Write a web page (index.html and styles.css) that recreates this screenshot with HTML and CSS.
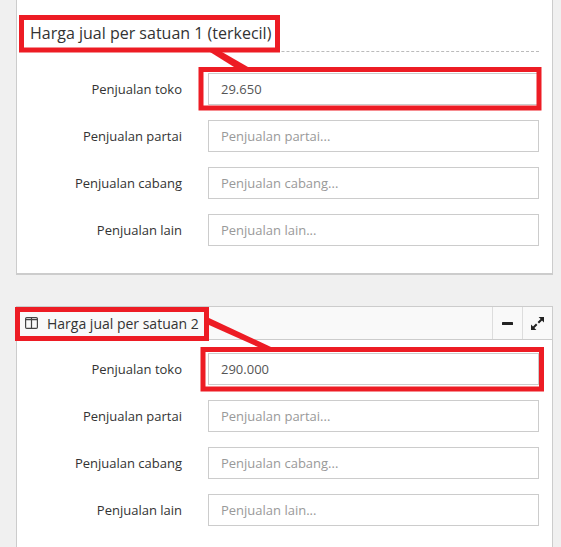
FILE: index.html
```html
<!DOCTYPE html>
<html lang="id">
<head>
  <meta charset="UTF-8" />
  <title>Harga jual</title>
  <link rel="stylesheet" href="styles.css">
</head>
<body>
  <!-- Panel 1 -->
  <section class="panel panel-first">
    <h3 class="legend">Harga jual per satuan 1 (terkecil)</h3>
    <div class="form-rows">
      <label class="row"><span class="row-label">Penjualan toko</span><input type="text" value="29.650" placeholder="Penjualan toko..."></label>
      <label class="row"><span class="row-label">Penjualan partai</span><input type="text" placeholder="Penjualan partai..."></label>
      <label class="row"><span class="row-label">Penjualan cabang</span><input type="text" placeholder="Penjualan cabang..."></label>
      <label class="row"><span class="row-label">Penjualan lain</span><input type="text" placeholder="Penjualan lain..."></label>
    </div>
  </section>

  <!-- Panel 2 -->
  <section class="panel panel-second">
    <header class="panel-head">
      <svg class="icon-columns" width="13" height="12" viewBox="0 0 13 12" fill="none" stroke="#444" stroke-width="1.2">
        <rect x="0.6" y="0.6" width="11.8" height="10.8" rx="1.2"/>
        <path d="M6.5 .6V11.4M.6 2.6H12.4"/>
      </svg>
      <span class="panel-title">Harga jual per satuan 2</span>
      <span class="head-btn">
        <svg width="11" height="3" viewBox="0 0 11 3"><rect width="11" height="3" rx="0.5" fill="#222"/></svg>
      </span>
      <span class="head-btn">
        <svg width="13" height="13" viewBox="0 0 13 13" fill="#222">
          <path d="M7.6 0H13V5.4L11 3.4 8 6.4 6.6 5 9.6 2Z"/>
          <path d="M5.4 13H0V7.6L2 9.6 5 6.6 6.4 8 3.4 11Z"/>
        </svg>
      </span>
    </header>
    <div class="form-rows">
      <label class="row"><span class="row-label">Penjualan toko</span><input type="text" value="290.000" placeholder="Penjualan toko..."></label>
      <label class="row"><span class="row-label">Penjualan partai</span><input type="text" placeholder="Penjualan partai..."></label>
      <label class="row"><span class="row-label">Penjualan cabang</span><input type="text" placeholder="Penjualan cabang..."></label>
      <label class="row"><span class="row-label">Penjualan lain</span><input type="text" placeholder="Penjualan lain..."></label>
    </div>
  </section>

  <!-- Red marks drawn over the screenshot -->
  <svg class="marks" width="561" height="547" viewBox="0 0 561 547" fill="none" stroke="#ed1c24" stroke-width="5">
    <rect x="21.5" y="17.5" width="256" height="32.5"/>
    <rect x="201" y="69.5" width="338" height="38.5"/>
    <rect x="17.5" y="309.5" width="189" height="29"/>
    <rect x="203" y="349.5" width="338.5" height="39.5"/>
    <polygon points="210,52 222,52 248,67 234,67" fill="#ed1c24" stroke="none"/>
    <polygon points="209,318 271,347 258,347 209,325" fill="#ed1c24" stroke="none"/>
  </svg>
</body>
</html>
```

FILE: styles.css
```css
html, body {
  height: 547px;
  overflow: hidden;
}

body {
  position: relative;
  margin: 0;
  padding: 0;
  background-color: #f0f0f0;
  font-family: "Open Sans", sans-serif;
  color: #333;
}

.panel {
  width: 537px;
  margin-left: 16px;
  box-sizing: border-box;
  background-color: #fff;
  border: 1px solid #ccc;
}

.panel-first {
  height: 275px;
  border-top: none;
  border-bottom-width: 2px;
}

.panel-second {
  margin-top: 31px;
  height: 241px;
  border-bottom: none;
}

.legend {
  margin: 0 13px 21px 5px;
  height: 52px;
  box-sizing: border-box;
  padding: 21px 0 0 8px;
  border-bottom: 1px dashed #bbb;
  font-size: 16px;
  line-height: 24px;
  font-weight: 400;
  color: #333;
}

.panel-head {
  display: flex;
  align-items: center;
  height: 32px;
  margin-bottom: 13px;
  background-color: #f9f9f9;
  border-bottom: 1px solid #ccc;
}

.icon-columns {
  margin-left: 8px;
}

.panel-title {
  flex: 1;
  margin-left: 9px;
  font-size: 14px;
  color: #333;
}

.head-btn {
  display: flex;
  align-items: center;
  justify-content: center;
  width: 29px;
  height: 32px;
  border-left: 1px solid #ddd;
}

.form-rows {
  display: flex;
  flex-direction: column;
  gap: 15px;
}

.row {
  display: grid;
  grid-template-columns: 165px 331px;
  column-gap: 26px;
  align-items: center;
}

.row-label {
  text-align: right;
  font-size: 13px;
  color: #333;
}

.row input {
  box-sizing: border-box;
  width: 100%;
  height: 32px;
  padding: 0 12px;
  border: 1px solid #ccc;
  border-radius: 0;
  background-color: #fff;
  font-family: "Open Sans", sans-serif;
  font-size: 13px;
  color: #555;
}

.row input::placeholder {
  color: #999;
  opacity: 1;
}

.marks {
  position: absolute;
  left: 0;
  top: 0;
}
```
